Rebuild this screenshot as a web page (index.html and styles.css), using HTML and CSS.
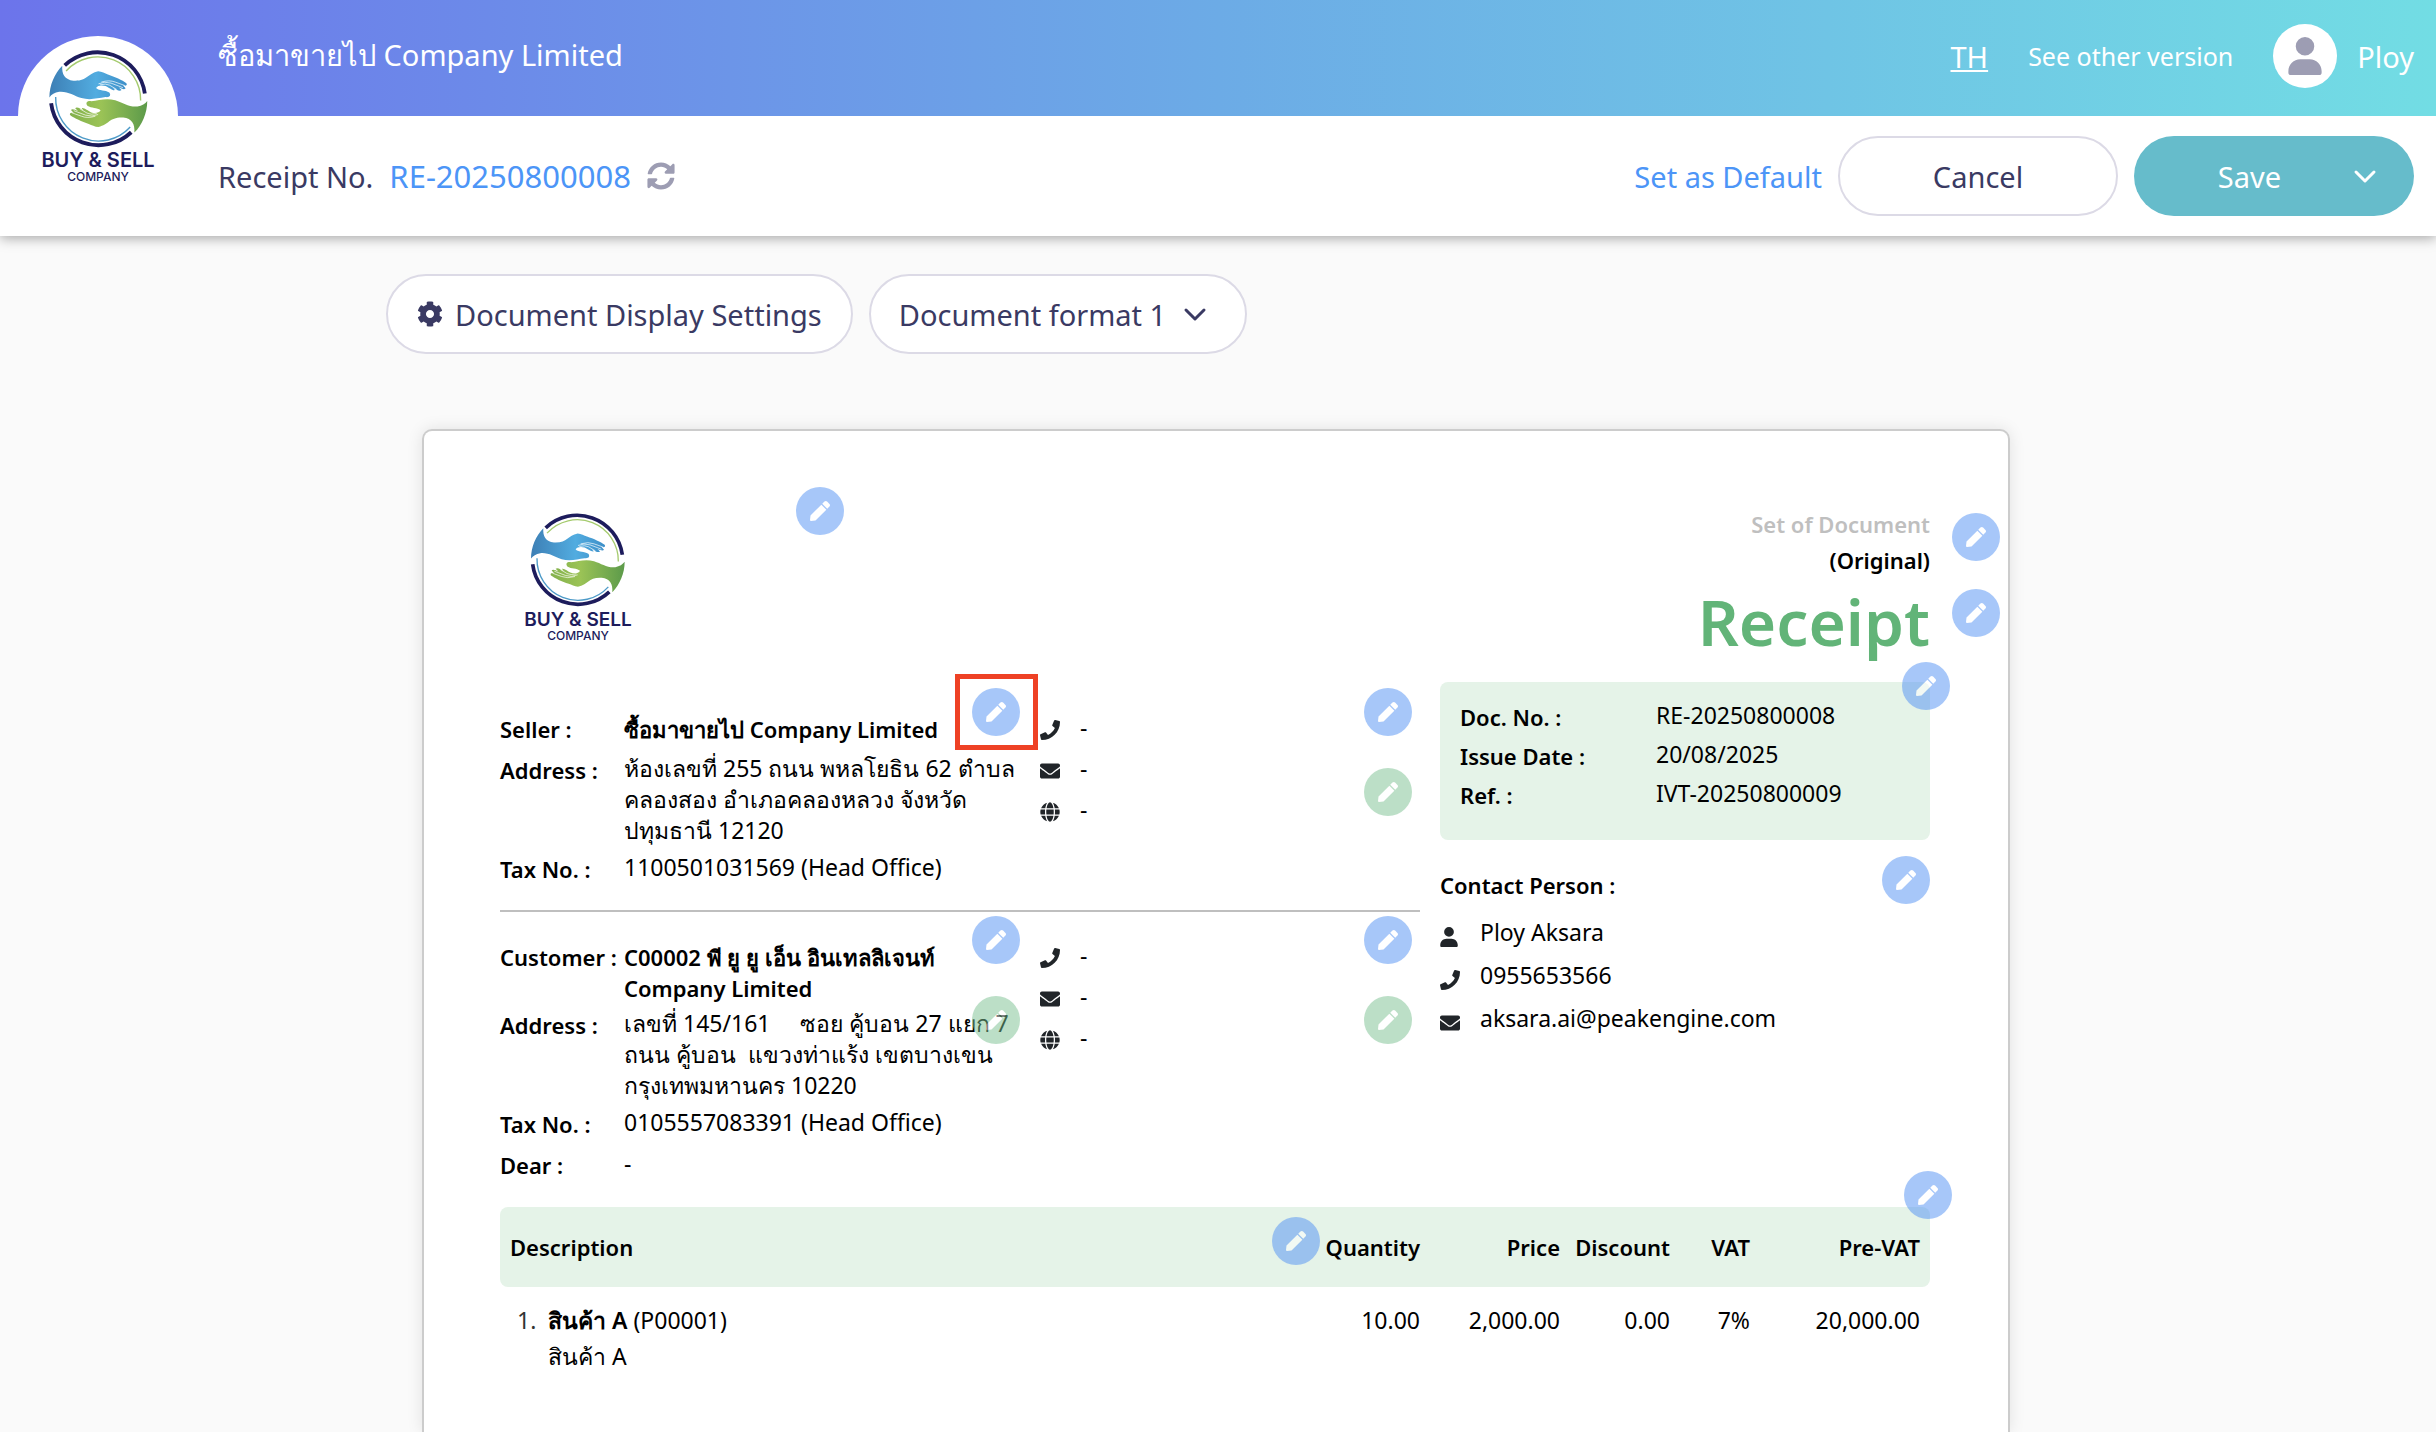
FILE: index.html
```html
<!DOCTYPE html>
<html lang="en">
<head>
  <meta charset="UTF-8">
  <meta name="viewport" content="width=device-width, initial-scale=1.0">
  <title>Receipt RE-20250800008</title>
  <link rel="stylesheet" href="styles.css">
</head>
<body>
  <!-- Shared icons -->
  <svg class="sprite" width="0" height="0" aria-hidden="true">
    <defs>
      <linearGradient id="blueHand" x1="0" x2="1"><stop offset="0" stop-color="#3d7fb5"/><stop offset=".6" stop-color="#52ace0"/><stop offset="1" stop-color="#3d8fc8"/></linearGradient>
      <linearGradient id="greenHand" x1="0" x2="1"><stop offset="0" stop-color="#5c9a4a"/><stop offset=".6" stop-color="#9bc356"/><stop offset="1" stop-color="#82b04c"/></linearGradient>
      <path id="hand" d="M190 146C188 170 197 186 222 189C262 191 262 169 293 162C304 163 312 168 321 171C341 178 362 187 374 196C378 202 372 205 364 202L372 211C369 216 360 212 352 208L360 216C354 221 345 214 336 209L341 216C334 218 324 208 314 204C303 201 291 202 287 210C297 219 313 215 325 223C331 231 326 238 314 236C292 239 270 246 245 239C222 232 207 219 181 221C168 223 159 229 153 237C153 202 168 168 190 146Z"/>
    </defs>
    <symbol id="logo" viewBox="129 98 330 290">
      <path d="M197 145A137 137 0 0 1 427 226" fill="none" stroke="#1d1c5c" stroke-width="11"/>
      <path d="M158 254A137 137 0 0 0 388 337" fill="none" stroke="#1d1c5c" stroke-width="11"/>
      <path d="M201 161A123 123 0 0 1 415 246" fill="none" stroke="#a5cb6e" stroke-width="4"/>
      <path d="M171 236A123 123 0 0 0 385 322" fill="none" stroke="#4d9ac8" stroke-width="4"/>
      <use href="#hand" fill="url(#blueHand)"/>
      <use href="#hand" fill="url(#greenHand)" transform="rotate(180 293.500 242)"/>
      <g fill="none" stroke="#fff" stroke-width="2">
        <path d="M294 198Q312 190 330 196L364 209M302 193Q325 186 342 193L370 203M298 201Q315 196 326 202L346 214"/>
        <path d="M293 286Q275 294 257 288L223 275M285 291Q262 298 245 291L217 281M289 283Q272 288 261 282L241 270"/>
      </g>
    </symbol>
    <symbol id="pen" viewBox="0 0 512 512"><path fill="currentColor" d="M290.740 93.240l128.020 128.020-277.990 277.990-114.140 12.600C11.350 513.540-1.560 500.620.14 485.340l12.700-114.220 277.900-277.880zm207.200-19.060l-60.110-60.110c-18.750-18.750-49.160-18.750-67.910 0l-56.550 56.550 128.020 128.020 56.550-56.550c18.750-18.760 18.750-49.160 0-67.910z"/></symbol>
    <symbol id="phone" viewBox="0 0 512 512"><path fill="currentColor" d="M493.400 24.600l-104-24c-11.300-2.600-22.900 3.300-27.500 13.900l-48 112c-4.200 9.800-1.400 21.300 6.900 28l60.600 49.600c-36 76.700-98.900 140.500-177.200 177.200l-49.600-60.600c-6.800-8.300-18.200-11.100-28-6.900l-112 48C3.900 366.500-2 378.100.6 389.400l24 104C27.100 504.200 36.700 512 48 512c256.100 0 464-207.500 464-464 0-11.200-7.700-20.900-18.600-23.400z"/></symbol>
    <symbol id="mail" viewBox="0 0 512 512"><path fill="currentColor" d="M502.300 190.800c3.900-3.100 9.700-.2 9.700 4.700V400c0 26.500-21.500 48-48 48H48c-26.500 0-48-21.500-48-48V195.600c0-5 5.700-7.800 9.700-4.700 22.400 17.400 52.100 39.500 154.100 113.600 21.100 15.400 56.700 47.800 92.200 47.600 35.700.3 72-32.800 92.300-47.600 102-74.100 131.600-96.300 154-113.700zM256 320c23.200.4 56.600-29.200 73.400-41.400 132.700-96.300 142.800-104.700 173.400-128.700 5.800-4.500 9.200-11.500 9.200-18.900v-19c0-26.500-21.500-48-48-48H48c-26.500 0-48 21.500-48 48v19c0 7.400 3.400 14.300 9.200 18.900 30.600 23.900 40.700 32.400 173.400 128.700 16.800 12.200 50.200 41.800 73.400 41.400z"/></symbol>
    <symbol id="globe" viewBox="0 0 496 512"><path fill="currentColor" d="M336.500 160C322 70.700 287.800 8 248 8s-74 62.700-88.500 152h177zM152 256c0 22.200 1.200 43.500 3.300 64h185.300c2.100-20.500 3.300-41.800 3.300-64s-1.200-43.500-3.300-64H155.300c-2.100 20.500-3.300 41.800-3.300 64zm324.700-96c-28.600-67.900-86.500-120.400-158-141.600 24.400 33.800 41.200 84.700 50 141.600h108zM177.200 18.400C105.800 39.600 47.800 92.100 19.300 160h108c8.700-56.900 25.500-107.800 49.900-141.600zM487.400 192H372.700c2.100 21 3.300 42.500 3.300 64s-1.200 43-3.300 64h114.600c5.500-20.500 8.600-41.800 8.600-64s-3.100-43.500-8.500-64zM120 256c0-21.500 1.200-43 3.300-64H8.600C3.200 212.500 0 233.800 0 256s3.200 43.500 8.600 64h114.600c-2-21-3.200-42.500-3.200-64zm39.500 96c14.500 89.300 48.700 152 88.500 152s74-62.700 88.500-152h-177zm159.300 141.600c71.400-21.200 129.400-73.700 158-141.600h-108c-8.800 56.900-25.600 107.800-50 141.600zM19.300 352c28.600 67.900 86.500 120.400 158 141.600-24.400-33.800-41.200-84.700-50-141.600h-108z"/></symbol>
    <symbol id="user" viewBox="0 0 448 512"><path fill="currentColor" d="M224 0a125 125 0 1 0 0 250a125 125 0 1 0 0-250zM160 300C72 300 0 372 0 460v20c0 18 14 32 32 32h384c18 0 32-14 32-32v-20c0-88-72-160-160-160z"/></symbol>
    <symbol id="chevron" viewBox="0 0 24 24"><path fill="none" stroke="currentColor" stroke-width="3" stroke-linecap="round" stroke-linejoin="round" d="M3 8l9 9 9-9"/></symbol>
    <symbol id="gear" viewBox="0 0 512 512"><path fill="currentColor" d="M487.400 315.700l-42.600-24.600c4.300-23.200 4.300-47 0-70.200l42.600-24.600c4.900-2.800 7.100-8.600 5.500-14-11.100-35.600-30-67.800-54.700-94.600-3.800-4.100-10-5.100-14.800-2.300L380.800 110c-17.900-15.400-38.500-27.300-60.800-35.100V25.800c0-5.600-3.900-10.500-9.400-11.700-36.700-8.200-74.300-7.800-109.200 0-5.500 1.200-9.400 6.100-9.400 11.700V75c-22.200 7.900-42.800 19.800-60.800 35.100L88.700 85.500c-4.900-2.800-11-1.900-14.800 2.300-24.700 26.700-43.600 58.900-54.700 94.600-1.700 5.400.6 11.200 5.500 14L67.300 221c-4.300 23.200-4.300 47 0 70.200l-42.600 24.600c-4.900 2.800-7.100 8.600-5.500 14 11.100 35.600 30 67.800 54.700 94.600 3.800 4.100 10 5.100 14.800 2.300l42.600-24.600c17.900 15.400 38.500 27.300 60.800 35.100v49.200c0 5.600 3.900 10.500 9.400 11.700 36.700 8.200 74.300 7.800 109.200 0 5.500-1.200 9.400-6.100 9.400-11.700v-49.200c22.200-7.900 42.800-19.800 60.800-35.100l42.600 24.600c4.900 2.800 11 1.900 14.800-2.300 24.700-26.700 43.600-58.900 54.700-94.600 1.500-5.500-.7-11.300-5.600-14.100zM256 336c-44.100 0-80-35.900-80-80s35.900-80 80-80 80 35.900 80 80-35.900 80-80 80z"/></symbol>
    <symbol id="sync" viewBox="0 0 512 512"><path fill="currentColor" d="M370.720 133.280C339.458 104.008 298.888 87.962 255.848 88c-77.458.068-144.328 53.178-162.791 126.850-1.344 5.363-6.122 9.150-11.651 9.150H24.103c-7.498 0-13.194-6.807-11.807-14.176C33.933 94.924 134.813 8 256 8c66.448 0 126.791 26.136 171.315 68.685L463.030 40.970C478.149 25.851 504 36.559 504 57.941V192c0 13.255-10.745 24-24 24H345.941c-21.382 0-32.090-25.851-16.971-40.971l41.750-41.749zM32 296h134.059c21.382 0 32.090 25.851 16.971 40.971l-41.750 41.750c31.262 29.273 71.835 45.319 114.876 45.280 77.418-.07 144.315-53.144 162.787-126.849 1.344-5.363 6.122-9.150 11.651-9.150h57.304c7.498 0 13.194 6.807 11.807 14.176C478.067 417.076 377.187 504 256 504c-66.448 0-126.791-26.136-171.315-68.685L48.970 471.030C33.851 486.149 8 475.441 8 454.059V320c0-13.255 10.745-24 24-24z"/></symbol>
  </svg>

  <header class="header">
    <div class="brand-bar">
      <span class="company">ซื้อมาขายไป Company Limited</span>
      <nav class="account">
        <a class="lang" href="#">TH</a>
        <a class="version" href="#">See other version</a>
        <a class="profile" href="#"><span class="avatar"><svg><use href="#user"/></svg></span>Ploy</a>
      </nav>
    </div>
    <div class="action-bar">
      <div class="doc-number">
        <span>Receipt No.</span>
        <a href="#">RE-20250800008</a>
        <button class="refresh" aria-label="Refresh number"><svg><use href="#sync"/></svg></button>
      </div>
      <div class="actions">
        <a href="#">Set as Default</a>
        <button class="btn cancel">Cancel</button>
        <div class="save-group">
          <button class="save">Save</button>
          <button class="save-more" aria-label="More save options"><svg><use href="#chevron"/></svg></button>
        </div>
      </div>
    </div>
    <div class="logo-badge">
      <div class="logo">
        <svg><use href="#logo"/></svg>
        <span class="logo-name">BUY &amp; SELL</span>
        <span class="logo-sub">COMPANY</span>
      </div>
    </div>
  </header>

  <main class="workspace">
    <div class="toolbar">
      <button class="btn settings"><svg><use href="#gear"/></svg>Document Display Settings</button>
      <div class="format">
        <select class="btn" aria-label="Document format">
          <option>Document format 1</option>
        </select>
        <svg><use href="#chevron"/></svg>
      </div>
    </div>

    <section class="paper">
      <div class="columns">
        <div class="left">
          <div class="paper-logo">
            <div class="logo">
              <svg><use href="#logo"/></svg>
              <span class="logo-name">BUY &amp; SELL</span>
              <span class="logo-sub">COMPANY</span>
            </div>
            <button class="edit edit-logo" aria-label="Edit logo"><svg><use href="#pen"/></svg></button>
          </div>

          <div class="party seller">
            <dl class="info">
              <dt>Seller :</dt>
              <dd class="strong">ซื้อมาขายไป Company Limited</dd>
              <dt>Address :</dt>
              <dd>ห้องเลขที่ 255 ถนน พหลโยธิน 62 ตำบล<br>คลองสอง อำเภอคลองหลวง จังหวัด<br>ปทุมธานี 12120</dd>
              <dt>Tax No. :</dt>
              <dd>1100501031569 (Head Office)</dd>
            </dl>
            <ul class="channels">
              <li><svg><use href="#phone"/></svg>-</li>
              <li><svg><use href="#mail"/></svg>-</li>
              <li><svg><use href="#globe"/></svg>-</li>
            </ul>
            <div class="highlight"></div>
            <button class="edit edit-info" aria-label="Edit seller"><svg><use href="#pen"/></svg></button>
            <button class="edit edit-channels" aria-label="Edit seller channels"><svg><use href="#pen"/></svg></button>
            <button class="edit green edit-channels second" aria-label="Edit seller channel values"><svg><use href="#pen"/></svg></button>
          </div>

          <div class="party customer">
            <dl class="info">
              <dt>Customer :</dt>
              <dd class="strong">C00002 พี ยู ยู เอ็น อินเทลลิเจนท์<br>Company Limited</dd>
              <dt>Address :</dt>
              <dd>เลขที่ 145/161 &nbsp;&nbsp;&nbsp; ซอย คู้บอน 27 แยก 7<br>ถนน คู้บอน &nbsp;แขวงท่าแร้ง เขตบางเขน<br>กรุงเทพมหานคร 10220</dd>
              <dt>Tax No. :</dt>
              <dd>0105557083391 (Head Office)</dd>
              <dt>Dear :</dt>
              <dd>-</dd>
            </dl>
            <ul class="channels">
              <li><svg><use href="#phone"/></svg>-</li>
              <li><svg><use href="#mail"/></svg>-</li>
              <li><svg><use href="#globe"/></svg>-</li>
            </ul>
            <button class="edit edit-info" aria-label="Edit customer"><svg><use href="#pen"/></svg></button>
            <button class="edit green edit-info second" aria-label="Edit customer address"><svg><use href="#pen"/></svg></button>
            <button class="edit edit-channels" aria-label="Edit customer channels"><svg><use href="#pen"/></svg></button>
            <button class="edit green edit-channels second" aria-label="Edit customer channel values"><svg><use href="#pen"/></svg></button>
          </div>
        </div>

        <div class="right">
          <div class="heading">
            <p class="set">Set of Document</p>
            <p class="original">(Original)</p>
            <h1>Receipt</h1>
            <button class="edit edit-set" aria-label="Edit document set"><svg><use href="#pen"/></svg></button>
            <button class="edit edit-title" aria-label="Edit title"><svg><use href="#pen"/></svg></button>
          </div>

          <div class="summary">
            <dl>
              <dt>Doc. No. :</dt><dd>RE-20250800008</dd>
              <dt>Issue Date :</dt><dd>20/08/2025</dd>
              <dt>Ref. :</dt><dd>IVT-20250800009</dd>
            </dl>
            <button class="edit edit-summary" aria-label="Edit document details"><svg><use href="#pen"/></svg></button>
          </div>

          <div class="contact">
            <h2>Contact Person :</h2>
            <ul class="channels">
              <li><svg class="person"><use href="#user"/></svg>Ploy Aksara</li>
              <li><svg><use href="#phone"/></svg>0955653566</li>
              <li><svg><use href="#mail"/></svg>aksara.ai@peakengine.com</li>
            </ul>
            <button class="edit edit-contact" aria-label="Edit contact person"><svg><use href="#pen"/></svg></button>
          </div>
        </div>
      </div>

      <div class="items">
        <table>
          <thead>
            <tr>
              <th class="col-desc">Description</th>
              <th class="col-qty">Quantity</th>
              <th class="col-price">Price</th>
              <th class="col-discount">Discount</th>
              <th class="col-vat">VAT</th>
              <th class="col-total">Pre-VAT</th>
            </tr>
          </thead>
          <tbody>
            <tr>
              <td>
                <div class="item">
                  <span class="item-no">1.</span>
                  <div><b>สินค้า A</b> (P00001)<br>สินค้า A</div>
                </div>
              </td>
              <td>10.00</td>
              <td>2,000.00</td>
              <td>0.00</td>
              <td>7%</td>
              <td>20,000.00</td>
            </tr>
          </tbody>
        </table>
        <button class="edit edit-table" aria-label="Edit table"><svg><use href="#pen"/></svg></button>
        <button class="edit edit-columns" aria-label="Edit columns"><svg><use href="#pen"/></svg></button>
      </div>
    </section>
  </main>
</body>
</html>
```

FILE: styles.css
```css
* {
  box-sizing: border-box;
}

body {
  margin: 0;
  min-height: 100vh;
  display: flex;
  flex-direction: column;
  background-color: #fafafa;
  color: #3a3a63;
  font-family: "Noto Sans", sans-serif;
  font-size: 29px;
}

a {
  color: #4c95f7;
  text-decoration: none;
}

button,
select {
  font: inherit;
  color: inherit;
  cursor: pointer;
}

svg {
  display: block;
}

dl, dd, ul, p, h1, h2 {
  margin: 0;
  padding: 0;
}

.sprite {
  position: absolute;
}

/* Header */
.header {
  position: relative;
  background-color: #fff;
  box-shadow: 0 2px 12px rgba(0, 0, 0, 0.35);
}

.brand-bar {
  height: 116px;
  padding: 0 22px 4px 218px;
  display: flex;
  align-items: center;
  justify-content: space-between;
  color: #fff;
  background: linear-gradient(90deg, #6c74eb, #6cabe6 50%, #72dde4);
}

.account,
.profile {
  display: flex;
  align-items: center;
}

.account {
  gap: 40px;
}

.account a {
  color: #fff;
}

.account .lang {
  text-decoration: underline;
}

.account .version {
  font-size: 25px;
}

.profile {
  gap: 20px;
}

.avatar {
  width: 64px;
  height: 64px;
  border-radius: 50%;
  background-color: #fff;
  color: #9d9db3;
  display: flex;
  align-items: center;
  justify-content: center;
}

.avatar svg {
  width: 38px;
  height: 38px;
}

.action-bar {
  height: 120px;
  padding: 0 22px 0 218px;
  display: flex;
  align-items: center;
  justify-content: space-between;
}

.doc-number,
.actions {
  display: flex;
  align-items: center;
  gap: 16px;
}

.doc-number a {
  font-size: 31px;
}

.refresh {
  padding: 0;
  border: none;
  background: none;
  color: #9d9db3;
}

.refresh svg {
  width: 28px;
  height: 28px;
}

.logo-badge {
  position: absolute;
  left: 18px;
  top: 36px;
  width: 160px;
  height: 160px;
  padding-top: 13px;
  display: flex;
  justify-content: center;
  border-radius: 50%;
  background-color: #fff;
}

/* Company logo */
.logo {
  display: flex;
  flex-direction: column;
  align-items: center;
  color: #1d1c5c;
  font-family: Inter, sans-serif;
  white-space: nowrap;
}

.logo svg {
  width: 110px;
  height: 97px;
}

.logo-name {
  font-size: 19px;
  line-height: 21px;
  font-weight: 600;
}

.logo-sub {
  font-size: 12px;
  line-height: 11px;
  font-weight: 500;
}

.logo-badge svg {
  width: 115px;
  height: 101px;
}

.logo-badge .logo-name {
  font-size: 20px;
}

/* Buttons */
.btn {
  height: 80px;
  padding: 0 29px;
  border: 2px solid #dcdae6;
  border-radius: 40px;
  background-color: #fff;
}

.cancel {
  width: 280px;
}

.save-group {
  width: 280px;
  height: 80px;
  display: flex;
  border-radius: 40px;
  overflow: hidden;
  background-color: #66bccb;
  color: #fff;
}

.save-group button {
  border: none;
  background: none;
}

.save {
  flex: 1;
  padding: 0 0 0 20px;
}

.save-more {
  padding: 0 37px 0 8px;
}

.save-more svg,
.format svg {
  width: 24px;
  height: 24px;
}

/* Workspace */
.workspace {
  flex: 1;
  width: 100%;
  max-width: 1664px;
  margin: 0 auto;
  padding-top: 38px;
  display: flex;
  flex-direction: column;
}

.toolbar {
  display: flex;
  gap: 16px;
}

.settings {
  display: flex;
  align-items: center;
  gap: 12px;
}

.settings svg {
  width: 26px;
  height: 26px;
}

.format {
  position: relative;
}

.format select {
  width: 378px;
  padding: 0 28px;
  appearance: none;
}

.format svg {
  position: absolute;
  right: 40px;
  top: 28px;
  pointer-events: none;
}

.paper {
  flex: 1;
  margin: 75px 40px 0 36px;
  padding: 75px 78px 0 76px;
  border: 2px solid #ccc;
  border-bottom: none;
  border-radius: 10px 10px 0 0;
  background-color: #fff;
  box-shadow: 0 0 16px rgba(0, 0, 0, 0.1);
  color: #000;
  font-size: 23px;
  line-height: 31px;
}

.columns {
  display: flex;
  gap: 20px;
}

.left {
  flex: 1;
}

.right {
  width: 490px;
}

.paper-logo,
.party,
.heading,
.summary,
.contact,
.items {
  position: relative;
}

.paper-logo {
  padding: 6px 0 71px 23px;
  display: flex;
}

/* Seller and customer */
.party {
  display: flex;
}

.seller {
  padding-bottom: 17px;
  border-bottom: 2px solid #bfbfbf;
}

.customer {
  padding: 28px 0 18px;
}

.info {
  width: 540px;
  display: grid;
  grid-template-columns: 124px 1fr;
  white-space: nowrap;
}

.info dt {
  padding: 2px 0 8px;
}

.info dd {
  padding-bottom: 6px;
}

.info .strong {
  padding: 2px 0 4px;
}

/* Bold captions share one size */
dt,
th,
.strong,
.heading p,
.contact h2 {
  font-size: 22px;
  font-weight: 600;
}

.channels {
  list-style: none;
}

.channels li {
  height: 41px;
  display: flex;
  align-items: flex-start;
  gap: 20px;
}

.channels svg {
  width: 20px;
  height: 20px;
  margin-top: 8px;
  color: #212529;
}

.highlight {
  position: absolute;
  left: 455px;
  top: -38px;
  width: 83px;
  height: 76px;
  border: 5px solid #ee4125;
}

/* Document heading */
.heading {
  text-align: right;
}

.heading p {
  line-height: 36px;
}

.set {
  color: #bfbfbf;
}

.heading h1 {
  font-size: 64px;
  line-height: 88px;
  font-weight: 600;
  color: #62b478;
}

.summary {
  margin-top: 16px;
  padding: 18px 20px 23px;
  border-radius: 8px;
  background-color: #e5f3e8;
}

.summary dl {
  display: grid;
  grid-template-columns: 196px 1fr;
  grid-auto-rows: 39px;
}

.summary dt {
  padding-top: 2px;
}

.contact {
  padding-top: 30px;
}

.contact h2 {
  margin-bottom: 16px;
}

.contact li {
  height: 43px;
}

.contact svg {
  margin-top: 10px;
}

.contact .person {
  width: 18px;
  margin-right: 2px;
}

/* Items */
table {
  width: 100%;
  border-collapse: collapse;
  table-layout: fixed;
}

th {
  height: 80px;
  padding: 0 10px 0 0;
  background-color: #e5f3e8;
  text-align: right;
}

th:first-child {
  padding-left: 10px;
  border-radius: 8px 0 0 8px;
  text-align: left;
}

th:last-child {
  border-radius: 0 8px 8px 0;
}

td {
  padding: 15px 10px 0 0;
  line-height: 36px;
  text-align: right;
  vertical-align: top;
}

td b {
  font-weight: 600;
}

.col-qty {
  width: 110px;
}

.col-price {
  width: 140px;
}

.col-discount {
  width: 110px;
}

.col-vat {
  width: 80px;
}

.col-total {
  width: 170px;
}

.item {
  padding-left: 17px;
  display: flex;
  text-align: left;
}

.item-no {
  width: 31px;
  color: #333;
}

/* Round edit buttons that float over the paper */
.edit {
  position: absolute;
  width: 48px;
  height: 48px;
  padding: 14px;
  border: none;
  border-radius: 50%;
  background-color: #5191f5;
  color: #fff;
  opacity: 0.5;
}

.edit.green {
  background-color: #7bc191;
}

.edit svg,
.contact .edit svg {
  width: 20px;
  height: 20px;
  margin: 0;
  color: #fff;
}

.edit-logo {
  left: 296px;
  top: -19px;
}

.edit-info {
  left: 472px;
  top: -24px;
}

.edit-channels {
  left: 864px;
  top: -24px;
}

.edit.second {
  top: 56px;
}

.customer .edit {
  top: 4px;
}

.customer .edit.second {
  top: 84px;
}

.edit-set {
  right: -70px;
  top: 7px;
}

.edit-title {
  right: -70px;
  top: 83px;
}

.edit-summary {
  right: -20px;
  top: -20px;
}

.edit-contact {
  right: 0;
  top: 16px;
}

.edit-table {
  right: -22px;
  top: -36px;
}

.edit-columns {
  right: 610px;
  top: 10px;
}
```
